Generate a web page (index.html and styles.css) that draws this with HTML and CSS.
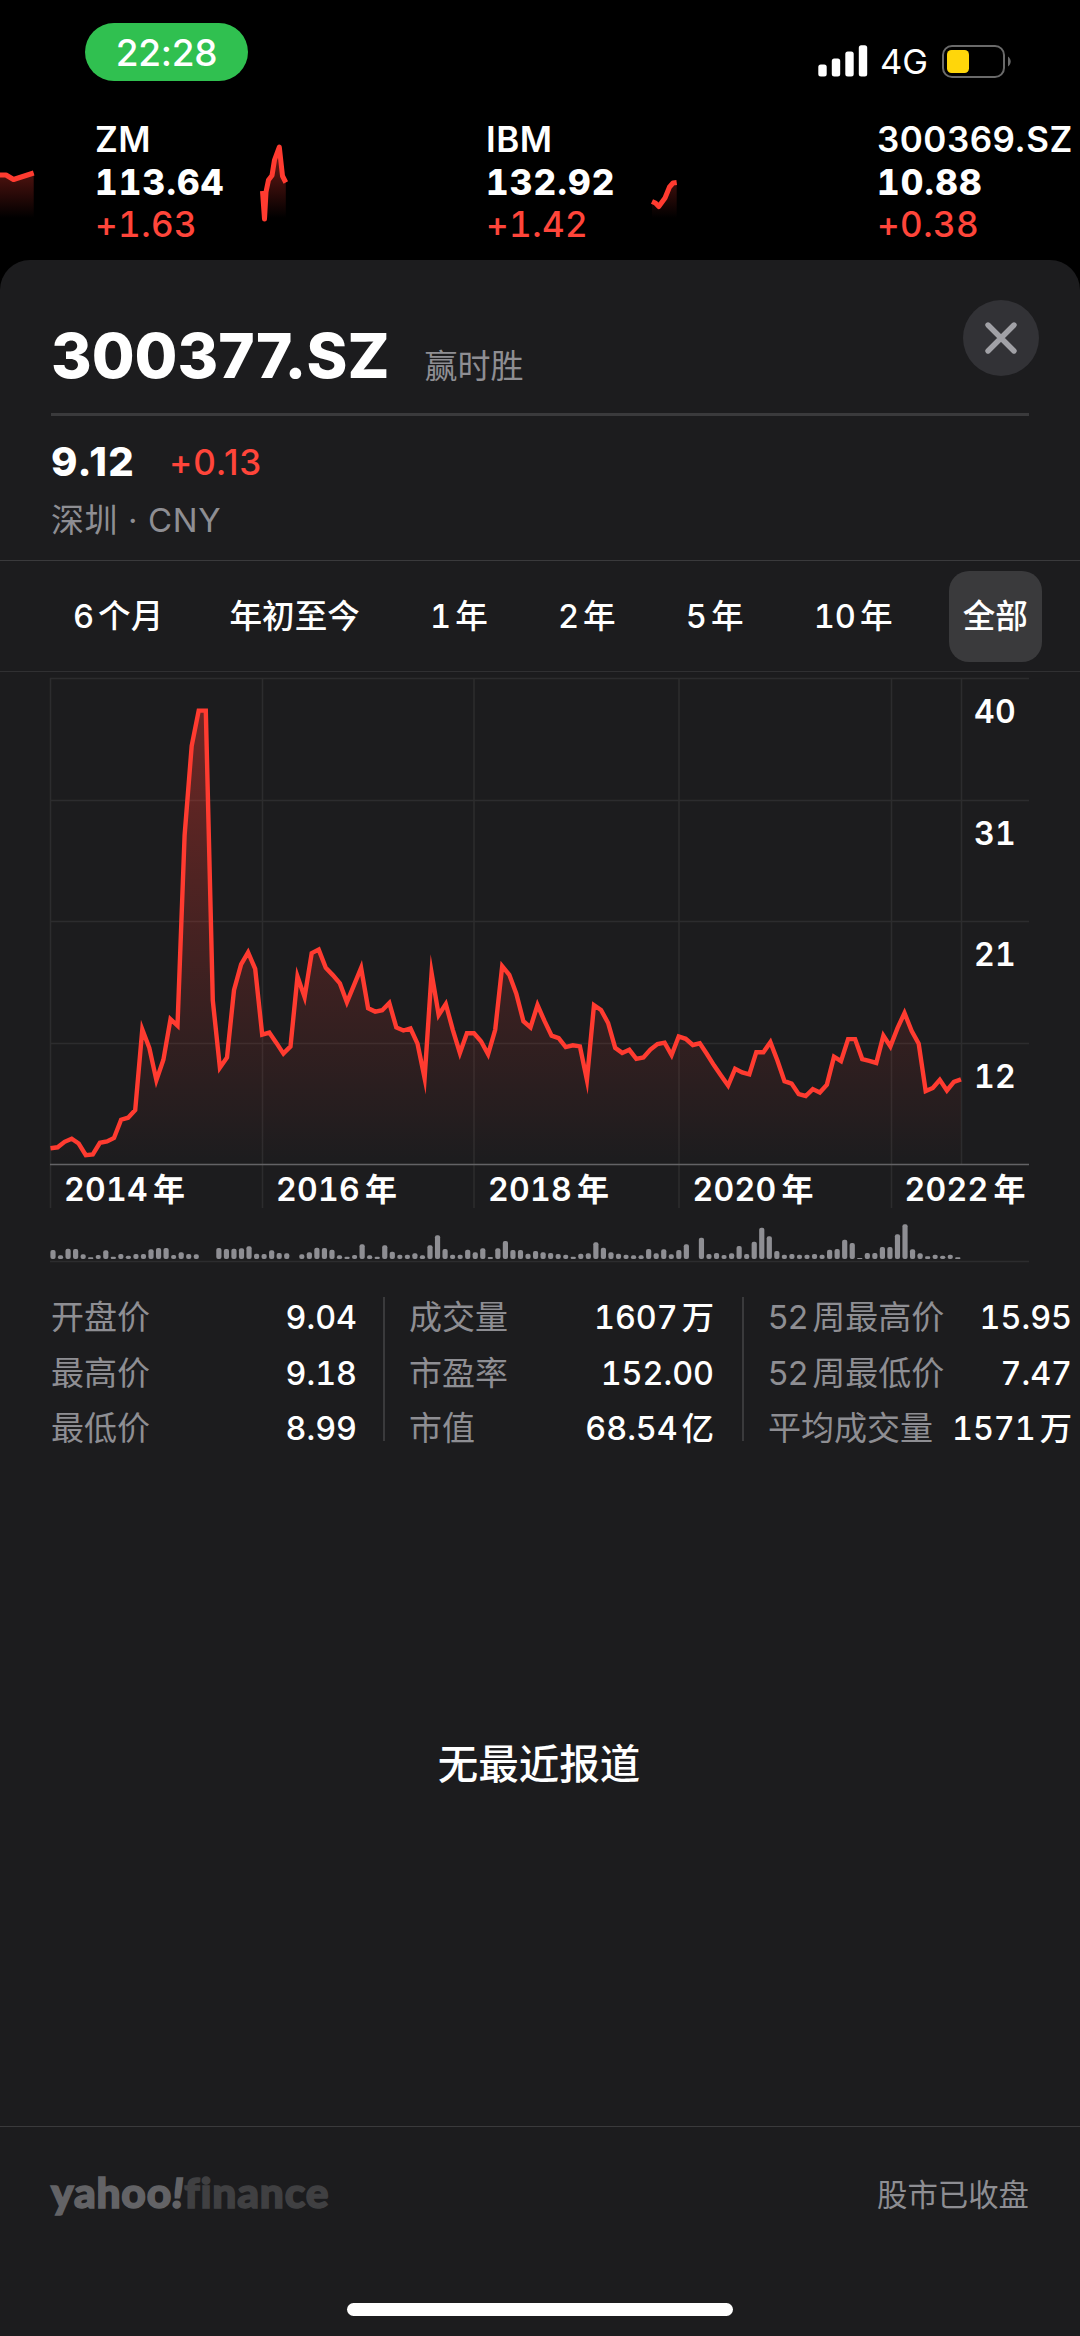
FILE: index.html
```html
<!DOCTYPE html>
<html lang="zh-CN">
<head>
    <meta charset="UTF-8">
    <meta name="viewport" content="width=device-width, initial-scale=1.0">
    <title>300377.SZ</title>
    <link rel="stylesheet" href="styles.css">
</head>
<body>
    <header class="status-bar">
        <span class="time">22:28</span>
        <div class="status-icons">
            <svg class="signal" width="50" height="32" viewBox="0 0 50 32" fill="#fff">
                <rect x="0.3" y="19.5" width="8.4" height="12" rx="2.5"/>
                <rect x="13.8" y="13.5" width="8.4" height="18" rx="2.5"/>
                <rect x="27.3" y="6.5" width="8.4" height="25" rx="2.5"/>
                <rect x="40.8" y="0.3" width="8.4" height="31.2" rx="2.5"/>
            </svg>
            <span class="network">4G</span>
            <svg class="battery" width="70" height="33" viewBox="0 0 70 33">
                <rect x="1" y="1" width="61" height="31" rx="9" fill="none" stroke="#6a6a6a" stroke-width="2"/>
                <rect x="5" y="5" width="22" height="23" rx="4.5" fill="#ffd60a"/>
                <path d="M66 11.5a6 6 0 0 1 0 10z" fill="#6a6a6a"/>
            </svg>
        </div>
    </header>

    <section class="ticker">
        <svg class="sparks" width="1080" height="142" viewBox="0 118 1080 142">
            <defs>
                <linearGradient id="spark-fill" gradientUnits="userSpaceOnUse" x1="0" y1="145" x2="0" y2="218">
                    <stop offset="0" stop-color="#ff3b30" stop-opacity="0.5"/>
                    <stop offset="1" stop-color="#ff3b30" stop-opacity="0"/>
                </linearGradient>
            </defs>
            <path class="spark-area" d="M0 175H6L13.5 180L33.7 173V220H0Z"/>
            <path class="spark-line" d="M0 175H6L13.5 179.5L33.7 173"/>
            <path class="spark-area" d="M262 195L264.5 216L268 181L271.5 175L279 152L282 176L285.8 182V220H262Z"/>
            <path class="spark-line" d="M262.5 191L264.5 219L266 192L268.5 180L272 175.5L274.5 160L279.3 147L282.5 176L285.8 182.5"/>
            <path class="spark-area" d="M652 201L658.8 207L664.7 197L669.5 186L672.6 182.5H676.7V220H652Z"/>
            <path class="spark-line" d="M652 201.5L655.4 203L658.8 206.5L665 198L669.5 187L673 183L676.7 182.5"/>
        </svg>
        <div class="quote">
            <span class="symbol">ZM</span>
            <span class="price">113.64</span>
            <span class="change">+1.63</span>
        </div>
        <div class="quote">
            <span class="symbol">IBM</span>
            <span class="price">132.92</span>
            <span class="change">+1.42</span>
        </div>
        <div class="quote">
            <span class="symbol">300369.SZ</span>
            <span class="price">10.88</span>
            <span class="change">+0.38</span>
        </div>
    </section>

    <main class="sheet">
        <div class="title-row">
            <h1>300377.SZ</h1>
            <span class="name">赢时胜</span>
            <button class="close" aria-label="关闭">
                <svg width="34" height="34" viewBox="0 0 34 34">
                    <path d="M4 4L30 30M30 4L4 30" stroke="#a1a1a6" stroke-width="5.4" stroke-linecap="round"/>
                </svg>
            </button>
        </div>
        <div class="summary">
            <div class="summary-price">
                <strong>9.12</strong>
                <span class="change">+0.13</span>
            </div>
            <div class="exchange">深圳 · CNY</div>
        </div>

        <nav class="ranges">
            <a>6<i></i>个月</a>
            <a>年初至今</a>
            <a>1<i></i>年</a>
            <a>2<i></i>年</a>
            <a>5<i></i>年</a>
            <a>10<i></i>年</a>
            <a class="active">全部</a>
        </nav>

        <svg class="chart" width="1080" height="600" viewBox="0 672 1080 600">
            <defs>
                <linearGradient id="area-fill" gradientUnits="userSpaceOnUse" x1="0" y1="700" x2="0" y2="1164">
                    <stop offset="0" stop-color="#ff3b30" stop-opacity="0.37"/>
                    <stop offset="1" stop-color="#ff3b30" stop-opacity="0"/>
                </linearGradient>
            </defs>
            <path class="grid" d="M50 678.5H1029M50 800.5H1029M50 921.5H1029M50 1043.5H1029"/>
            <path class="grid" d="M50.5 678V1208M262.5 678V1208M474 678V1208M679 678V1208M891.5 678V1208M961.5 678V1164"/>
            <path id="area" fill="url(#area-fill)"/>
            <path class="axis" d="M50 1164.5H1029"/>
            <path id="line" class="line"/>
            <g class="label">
                <text x="974" y="723">40</text>
                <text x="974" y="845">31</text>
                <text x="974" y="966">21</text>
                <text x="974" y="1088">12</text>
            </g>
            <g class="label">
                <text x="64" y="1201">2014<tspan dx="5">年</tspan></text>
                <text x="276" y="1201">2016<tspan dx="5">年</tspan></text>
                <text x="488" y="1201">2018<tspan dx="5">年</tspan></text>
                <text x="692.5" y="1201">2020<tspan dx="5">年</tspan></text>
                <text x="904.5" y="1201">2022<tspan dx="5">年</tspan></text>
            </g>
            <g id="volume" fill="#8e8e93"></g>
            <path class="grid" d="M50 1261.5H1029"/>
        </svg>

        <section class="stats">
            <dl>
                <div><dt>开盘价</dt><dd>9.04</dd></div>
                <div><dt>最高价</dt><dd>9.18</dd></div>
                <div><dt>最低价</dt><dd>8.99</dd></div>
            </dl>
            <dl>
                <div><dt>成交量</dt><dd>1607<i></i>万</dd></div>
                <div><dt>市盈率</dt><dd>152.00</dd></div>
                <div><dt>市值</dt><dd>68.54<i></i>亿</dd></div>
            </dl>
            <dl>
                <div><dt>52<i></i>周最高价</dt><dd>15.95</dd></div>
                <div><dt>52<i></i>周最低价</dt><dd>7.47</dd></div>
                <div><dt>平均成交量</dt><dd>1571<i></i>万</dd></div>
            </dl>
        </section>

        <p class="no-news">无最近报道</p>

        <footer>
            <div class="logo">yahoo<em>!</em><span>finance</span></div>
            <span class="market">股市已收盘</span>
        </footer>
        <div class="home-indicator"></div>
    </main>

    <script src="chart.js"></script>
</body>
</html>
```
FILE: styles.css
```css
* {
    box-sizing: border-box;
}

body {
    margin: 0;
    width: 1080px;
    height: 2336px;
    overflow: hidden;
    display: flex;
    flex-direction: column;
    background: #000;
    color: #fff;
    font-family: Inter, "Noto Sans CJK SC", sans-serif;
}

/* thin space between digits and Chinese characters */
i {
    display: inline-block;
    width: 4px;
}

.status-bar {
    height: 118px;
    flex: none;
    display: flex;
    justify-content: space-between;
    align-items: flex-start;
    padding: 23px 68px 0 85px;
}

.time {
    width: 163px;
    height: 58px;
    line-height: 59px;
    border-radius: 29px;
    background: #30c050;
    text-align: center;
    font-size: 37px;
    font-weight: 500;
    letter-spacing: -0.3px;
}

.status-icons {
    display: flex;
    align-items: center;
    margin-top: 22px;
    height: 32px;
}

.network {
    margin: 0 13px 0 12px;
    width: 49px;
    line-height: 32px;
    font-size: 34.5px;
    position: relative;
    top: 1px;
}

.ticker {
    position: relative;
    height: 142px;
    flex: none;
    display: grid;
    grid-template-columns: 391px 391px 202px;
    padding-left: 95px;
}

.sparks {
    position: absolute;
    left: 0;
    top: 0;
}

.spark-area {
    fill: url(#spark-fill);
}

.spark-line {
    fill: none;
    stroke: #ff3b30;
    stroke-width: 5;
    stroke-linejoin: round;
}

.quote {
    display: flex;
    flex-direction: column;
    line-height: 42.5px;
    font-size: 35px;
}

.symbol {
    font-weight: 600;
    letter-spacing: 0.5px;
}

.price {
    font-weight: 800;
    font-variant-numeric: tabular-nums;
    letter-spacing: 1.2px;
}

.change {
    color: #ff453a;
    font-weight: 500;
    letter-spacing: 0.8px;
}

.quote .change {
    font-variant-numeric: tabular-nums;
    letter-spacing: 0.4px;
}

.sheet {
    flex: 1;
    display: flex;
    flex-direction: column;
    background: #1c1c1e;
    border-radius: 30px 30px 0 0;
}

.title-row {
    height: 156px;
    flex: none;
    margin: 0 51px;
    border-bottom: 3px solid #3a3a3c;
    display: flex;
    align-items: baseline;
    position: relative;
}

h1 {
    margin: 0;
    padding-top: 58px;
    line-height: 75px;
    font-size: 62px;
    font-weight: 800;
}

.name {
    margin-left: 35px;
    font-size: 33px;
    color: #8e8e93;
}

.close {
    position: absolute;
    right: -10px;
    top: 40px;
    width: 76px;
    height: 76px;
    padding: 0;
    border: none;
    border-radius: 50%;
    background: #323236;
    display: flex;
    align-items: center;
    justify-content: center;
}

.summary {
    height: 145px;
    flex: none;
    padding: 21px 51px 0;
    border-bottom: 1px solid #3a3a3c;
}

.summary-price {
    display: flex;
    align-items: baseline;
    gap: 34px;
    line-height: 50px;
    font-size: 35px;
}

.summary-price strong {
    font-size: 40px;
    font-weight: 800;
    letter-spacing: 1.3px;
}

.summary-price .change {
    position: relative;
    top: -1px;
}

.exchange {
    margin-top: 7px;
    line-height: 50px;
    font-size: 33px;
    letter-spacing: 0.6px;
    color: #8e8e93;
}

.ranges {
    height: 111px;
    flex: none;
    padding: 0 38px 0 59px;
    border-bottom: 1px solid #303032;
    display: flex;
    justify-content: space-between;
    align-items: center;
    font-size: 32.6px;
    font-weight: 500;
}

.ranges a {
    height: 91px;
    line-height: 91px;
    padding: 0 14px;
    font-variant-numeric: tabular-nums;
}

.ranges a:first-child {
    margin-right: -4px;
}

.ranges .active {
    border-radius: 20px;
    background: #3a3a3c;
}

.chart {
    flex: none;
    display: block;
}

.grid,
.axis {
    fill: none;
    stroke: #2c2c2e;
    stroke-width: 1.5;
}

.axis {
    stroke: #636366;
}

.line {
    fill: none;
    stroke: #ff3b30;
    stroke-width: 4.4;
    stroke-miterlimit: 12;
}

.label {
    fill: #fff;
    font-size: 32px;
    font-weight: 600;
    font-variant-numeric: tabular-nums;
    letter-spacing: 0.3px;
}

.stats {
    display: grid;
    grid-template-columns: 334px 359px 328px;
    margin: 25px 0 0 51px;
    height: 144px;
    flex: none;
}

.stats dl {
    height: 144px;
    margin: 0;
    padding: 4px 28px 0 24px;
    border-right: 2px solid #3a3a3c;
    display: flex;
    flex-direction: column;
    gap: 22.7px;
}

.stats dl:first-child {
    padding-left: 0;
    padding-right: 26px;
}

.stats dl:last-child {
    padding-right: 0;
    border-right: none;
}

.stats div {
    display: flex;
    justify-content: space-between;
    line-height: 33px;
    font-size: 33px;
    white-space: nowrap;
}

.stats dt {
    color: #8e8e93;
}

.stats dd {
    margin: 0;
    font-weight: 500;
    font-size: 32.3px;
    font-variant-numeric: tabular-nums;
}

.no-news {
    margin: 0;
    padding: 294px 2px 0 0;
    line-height: 60px;
    text-align: center;
    font-size: 40.5px;
    font-weight: 500;
}

footer {
    margin-top: auto;
    height: 177px;
    flex: none;
    padding: 38px 51px 0;
    border-top: 1px solid #3a3a3c;
    display: flex;
    justify-content: space-between;
}

.logo {
    font-family: Lato, sans-serif;
    font-size: 42.5px;
    font-weight: 900;
    font-variant-ligatures: none;
    line-height: 54px;
    letter-spacing: 0.8px;
    color: #636366;
    -webkit-text-stroke: 1.6px;
}

.logo span {
    color: #404042;
}

.market {
    line-height: 60px;
    font-size: 30.4px;
    color: #8e8e93;
}

.home-indicator {
    width: 386px;
    height: 13px;
    flex: none;
    margin: 0 auto 20px;
    border-radius: 7px;
    background: #fff;
}
```
FILE: chart.js
```js
// Price history, measured down from the top edge of the plot
const prices = [
    1389, 1386, 1370, 1361, 1375, 1409, 1407, 1373, 1369, 1359, 1306, 1300, 1278,
    1044, 1097, 1191, 1132, 1014, 1033, 480, 220, 118, 118, 960, 1155, 1125, 930,
    855, 820, 868, 1059, 1053, 1083, 1114, 1093, 890, 950, 822, 812, 865, 886, 910,
    965, 915, 865, 982, 992, 988, 967, 1038, 1047, 1041, 1085, 1185, 880, 1002, 970,
    1045, 1112, 1055, 1055, 1078, 1116, 1045, 860, 885, 940, 1020, 1038, 973, 1020,
    1062, 1069, 1095, 1090, 1093, 1190, 973, 987, 1025, 1097, 1112, 1103, 1129, 1125,
    1102, 1086, 1082, 1118, 1064, 1071, 1089, 1084, 1115, 1148, 1178, 1207, 1158,
    1169, 1174, 1110, 1110, 1081, 1135, 1194, 1201, 1232, 1237, 1217, 1227, 1204,
    1123, 1136, 1072, 1072, 1130, 1135, 1141, 1062, 1093, 1040, 996, 1048, 1085,
    1223, 1214, 1190, 1221, 1196, 1189
];

// Traded volume per bar, 0 = no trading
const volumes = [
    27, 11, 31, 30, 14, 5, 12, 26, 7, 15, 10, 15, 15, 29, 33, 33, 12, 20, 15, 14, 0, 0,
    33, 30, 31, 32, 38, 16, 15, 26, 18, 17, 0, 14, 20, 34, 33, 28, 11, 7, 12, 44, 11, 7,
    41, 22, 13, 13, 17, 11, 41, 71, 30, 13, 13, 28, 20, 32, 6, 32, 54, 27, 27, 16, 24,
    20, 18, 15, 13, 7, 16, 17, 50, 34, 20, 16, 13, 11, 11, 30, 17, 29, 14, 27, 44, 0, 64,
    15, 18, 12, 17, 39, 15, 52, 94, 68, 24, 13, 15, 13, 13, 15, 13, 28, 30, 58, 48, 3,
    18, 18, 36, 36, 74, 104, 29, 17, 8, 13, 10, 13, 5
];

const left = 50.5;
const right = 961;
const bottom = 1164;

// Price line and the area under it
const step = (right - left) / (prices.length - 1);
const points = prices.map((p, i) => `${(left + i * step).toFixed(1)} ${(670 + p / 2.904).toFixed(1)}`);
const path = 'M' + points.join('L');
document.getElementById('line').setAttribute('d', path);
document.getElementById('area').setAttribute('d', `${path}V${bottom}H${left}Z`);

// Volume bars
const bars = document.getElementById('volume');
volumes.forEach((v, i) => {
    if (!v) return;
    const h = v / 3;
    const rect = document.createElementNS('http://www.w3.org/2000/svg', 'rect');
    rect.setAttribute('x', 50.4 + i * 7.54);
    rect.setAttribute('y', 1259 - h);
    rect.setAttribute('width', 5.2);
    rect.setAttribute('height', h);
    rect.setAttribute('rx', Math.min(2, h / 2));
    bars.appendChild(rect);
});
```
